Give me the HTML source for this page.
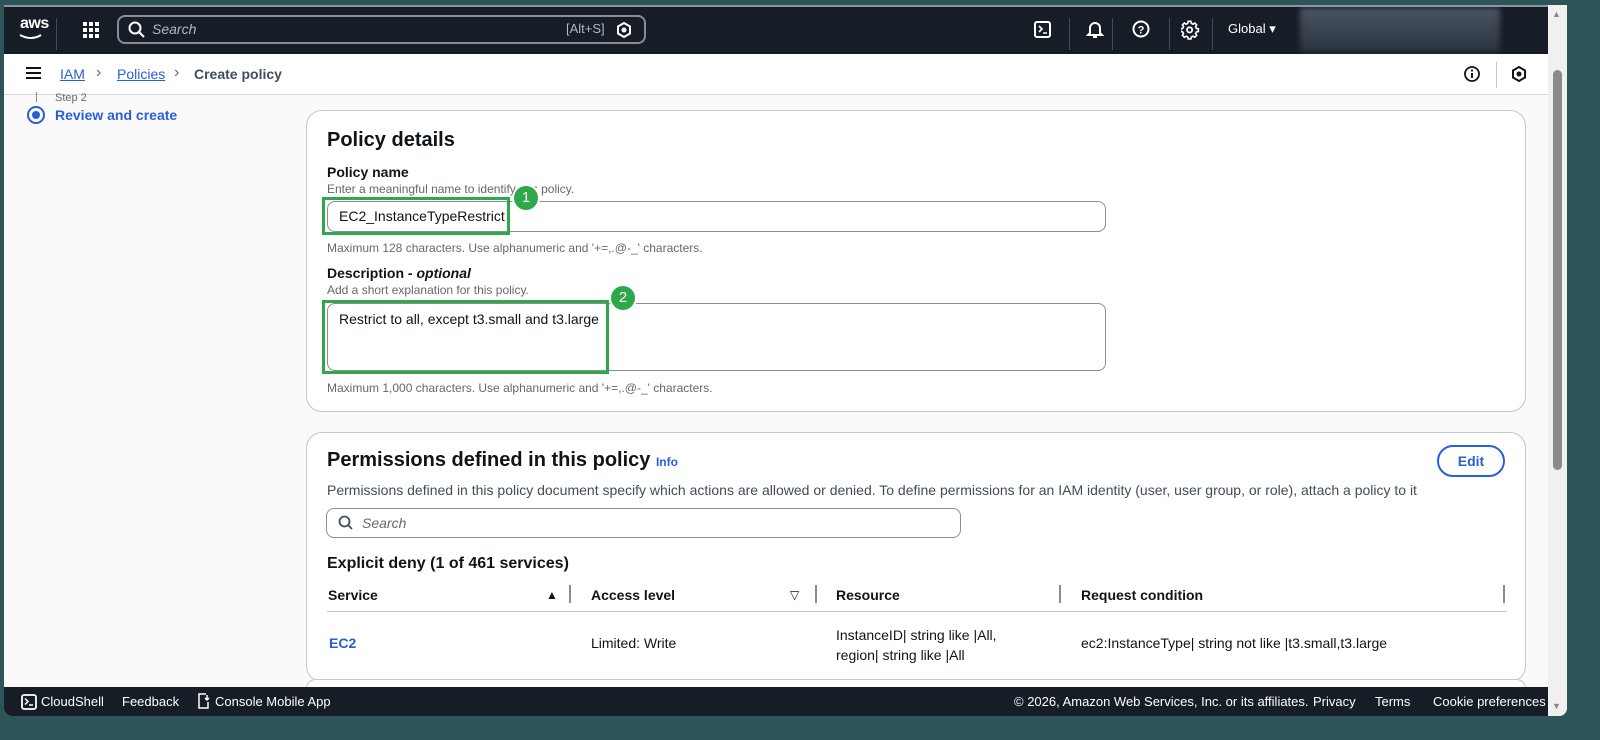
<!DOCTYPE html>
<html><head><meta charset="utf-8"><style>
*{box-sizing:border-box;margin:0;padding:0}
body{width:1600px;height:740px;background:#2d5459;font-family:"Liberation Sans",sans-serif;position:relative;overflow:hidden;color:#0f141a}
.win{position:absolute;left:4px;top:5px;width:1563px;height:711px;background:#fff;border-radius:0 0 8px 8px;overflow:hidden}
.top{position:absolute;left:0;top:0;width:1544px;height:49px;background:#161d26}
.topline{position:absolute;left:0;top:0;width:1563px;height:2px;background:#8a96a3}
.scroll{position:absolute;left:1544px;top:0;width:19px;height:711px;background:#f0f0f0}
.thumb{position:absolute;left:5px;top:65px;width:9px;height:400px;background:#8b8b8b;border-radius:5px}
.bc{position:absolute;left:0;top:49px;width:1544px;height:41px;background:#fff;border-bottom:1px solid #d5d8dc}
.main{position:absolute;left:0;top:90px;width:1544px;height:592px;background:#fafafa}
.card{position:absolute;background:#fff;border:1px solid #c6c6cd;border-radius:16px}
.lbl{font-weight:bold;font-size:14px}
.hint{font-size:12px;color:#656871}
.inp{position:absolute;border:1px solid #8c8c94;border-radius:8px;background:#fff}
.green{position:absolute;border:3px solid #2ea84a}
.badge{position:absolute;width:24px;height:24px;border-radius:50%;background:#2ea84a;color:#fff;font-size:15px;text-align:center;line-height:24px}
.foot{position:absolute;left:0;top:682px;width:1544px;height:29px;background:#161d26;color:#fff;font-size:13px}
.foot span{position:absolute;top:7px}
.th{position:absolute;top:582px;font-weight:bold;font-size:14px}
.sep{position:absolute;top:584px;width:2px;height:18px;background:#8c8c94}
</style></head><body>
<div class="win">
<div class="top">
<div style="position:absolute;left:16px;top:10px;color:#fff;font-size:16px;font-weight:bold;letter-spacing:-0.5px">aws</div>
<svg style="position:absolute;left:15px;top:28px" width="24" height="8"><path d="M1 2 Q12 8 22 2" stroke="#fff" stroke-width="2" fill="none"/></svg>
<div style="position:absolute;left:52px;top:13px;width:1px;height:32px;background:#414d5c"></div>
<svg style="position:absolute;left:79px;top:17px" width="18" height="18" fill="#fff"><rect x="0" y="0" width="4" height="4"/><rect x="6" y="0" width="4" height="4"/><rect x="12" y="0" width="4" height="4"/><rect x="0" y="6" width="4" height="4"/><rect x="6" y="6" width="4" height="4"/><rect x="12" y="6" width="4" height="4"/><rect x="0" y="12" width="4" height="4"/><rect x="6" y="12" width="4" height="4"/><rect x="12" y="12" width="4" height="4"/></svg>
<div style="position:absolute;left:113px;top:10px;width:529px;height:29px;border:2px solid #8c8c94;border-radius:8px"></div>
<svg style="position:absolute;left:124px;top:16px" width="18" height="18"><circle cx="7" cy="7" r="5.5" stroke="#fff" stroke-width="2" fill="none"/><path d="M11 11 L16 16" stroke="#fff" stroke-width="2"/></svg>
<div style="position:absolute;left:148px;top:16px;color:#b4b9bf;font-style:italic;font-size:14px">Search</div>
<div style="position:absolute;left:562px;top:16px;color:#b4b9bf;font-size:13px">[Alt+S]</div>
<svg style="position:absolute;left:612px;top:17px" width="16" height="16"><path d="M8 1 L14 4.5 L14 11.5 L8 15 L2 11.5 L2 4.5Z" stroke="#fff" stroke-width="2" fill="none"/><circle cx="8" cy="8" r="2.5" fill="#fff"/></svg>
<svg style="position:absolute;left:1030px;top:16px" width="18" height="18"><rect x="1" y="1" width="15" height="15" rx="2" stroke="#fff" stroke-width="2" fill="none"/><path d="M5 5 L8 8 L5 11 M9 12 H13" stroke="#fff" stroke-width="1.6" fill="none"/></svg>
<div style="position:absolute;left:1065px;top:13px;width:1px;height:32px;background:#414d5c"></div>
<svg style="position:absolute;left:1082px;top:15px" width="18" height="20"><path d="M4 13 V8 A5 5 0 0 1 14 8 V13 L16 15 H2Z M7 17 H11" stroke="#fff" stroke-width="2" fill="none"/></svg>
<div style="position:absolute;left:1108px;top:13px;width:1px;height:32px;background:#414d5c"></div>
<svg style="position:absolute;left:1128px;top:15px" width="20" height="20"><circle cx="9" cy="9" r="7.5" stroke="#fff" stroke-width="2" fill="none"/><text x="9" y="13.5" fill="#fff" font-size="11" font-weight="bold" text-anchor="middle" font-family="Liberation Sans">?</text></svg>
<div style="position:absolute;left:1165px;top:13px;width:1px;height:32px;background:#414d5c"></div>
<svg style="position:absolute;left:1177px;top:15px" width="20" height="20"><path d="M8 1.5h3l.5 2.2 1.8.9 2-1.2 2.1 2.1-1.2 2 .9 1.8 2.2.5v3l-2.2.5-.9 1.8 1.2 2-2.1 2.1-2-1.2-1.8.9-.5 2.2h-3l-.5-2.2-1.8-.9-2 1.2-2.1-2.1 1.2-2-.9-1.8-2.2-.5v-3l2.2-.5.9-1.8-1.2-2 2.1-2.1 2 1.2 1.8-.9z" transform="scale(0.9)" stroke="#fff" stroke-width="1.8" fill="none"/><circle cx="8.6" cy="9.9" r="2.6" stroke="#fff" stroke-width="1.8" fill="none"/></svg>
<div style="position:absolute;left:1208px;top:13px;width:1px;height:32px;background:#414d5c"></div>
<div style="position:absolute;left:1224px;top:16px;color:#fff;font-size:13px">Global ▾</div>
<div style="position:absolute;left:1296px;top:3px;width:200px;height:44px;background:linear-gradient(#4a5563,#2a333e);filter:blur(3px)"></div>
</div>
<div class="topline"></div>
<div class="bc">
<div style="position:absolute;left:22px;top:13px;width:15px;height:2px;background:#0f141a;box-shadow:0 5px 0 #0f141a,0 10px 0 #0f141a"></div>
<div style="position:absolute;left:56px;top:12px;font-size:14px;color:#295eda;text-decoration:underline">IAM</div>
<div style="position:absolute;left:92px;top:10px;font-size:16px;color:#656871">›</div>
<div style="position:absolute;left:113px;top:12px;font-size:14px;color:#295eda;text-decoration:underline">Policies</div>
<div style="position:absolute;left:170px;top:10px;font-size:16px;color:#656871">›</div>
<div style="position:absolute;left:190px;top:12px;font-size:14px;color:#414d5c;font-weight:bold">Create policy</div>
<svg style="position:absolute;left:1460px;top:12px" width="18" height="18"><circle cx="8" cy="8" r="7" stroke="#0f141a" stroke-width="1.8" fill="none"/><path d="M8 7 V12" stroke="#0f141a" stroke-width="2"/><circle cx="8" cy="4.5" r="1.1" fill="#0f141a"/></svg>
<div style="position:absolute;left:1492px;top:8px;width:1px;height:26px;background:#c6c6cd"></div>
<svg style="position:absolute;left:1507px;top:12px" width="16" height="16"><path d="M8 1 L14 4.5 L14 11.5 L8 15 L2 11.5 L2 4.5Z" stroke="#0f141a" stroke-width="2" fill="none"/><circle cx="8" cy="8" r="2.5" fill="#0f141a"/></svg>
</div>
<div class="main">
<div style="position:absolute;left:32px;top:-3px;width:1px;height:10px;background:#8c8c94"></div>
<div style="position:absolute;left:51px;top:-3px;font-size:11px;color:#656871">Step 2</div>
<div style="position:absolute;left:23px;top:11px;width:18px;height:18px;border:2px solid #295eda;border-radius:50%"><div style="margin:3px;width:8px;height:8px;border-radius:50%;background:#295eda"></div></div>
<div style="position:absolute;left:51px;top:12px;font-size:14px;color:#295eda;font-weight:bold">Review and create</div>

<div class="card" style="left:302px;top:15px;width:1220px;height:302px"></div>
<div style="position:absolute;left:323px;top:34px;font-size:20px;font-weight:bold">Policy details</div>
<div class="lbl" style="position:absolute;left:323px;top:69px">Policy name</div>
<div class="hint" style="position:absolute;left:323px;top:87px">Enter a meaningful name to identify this policy.</div>
<div class="inp" style="left:323px;top:106px;width:779px;height:31px"></div>
<div class="green" style="left:318px;top:102px;width:188px;height:38px"></div>
<div style="position:absolute;left:335px;top:113px;font-size:14px">EC2_InstanceTypeRestrict</div>
<div class="badge" style="left:508px;top:89px;border:2px solid #fff;width:28px;height:28px;line-height:24px">1</div>
<div class="hint" style="position:absolute;left:323px;top:146px">Maximum 128 characters. Use alphanumeric and '+=,.@-_' characters.</div>
<div class="lbl" style="position:absolute;left:323px;top:170px">Description - <i>optional</i></div>
<div class="hint" style="position:absolute;left:323px;top:188px">Add a short explanation for this policy.</div>
<div class="inp" style="left:323px;top:208px;width:779px;height:68px"></div>
<div class="green" style="left:318px;top:205px;width:287px;height:74px"></div>
<div style="position:absolute;left:335px;top:216px;font-size:14px">Restrict to all, except t3.small and t3.large</div>
<div class="badge" style="left:605px;top:189px;border:2px solid #fff;width:28px;height:28px;line-height:24px">2</div>
<div class="hint" style="position:absolute;left:323px;top:286px">Maximum 1,000 characters. Use alphanumeric and '+=,.@-_' characters.</div>

<div class="card" style="left:302px;top:337px;width:1220px;height:250px"></div>
<div style="position:absolute;left:323px;top:354px;font-size:20px;font-weight:bold">Permissions defined in this policy <span style="font-size:12px;color:#295eda">Info</span></div>
<div style="position:absolute;left:1433px;top:350px;width:68px;height:32px;border:2px solid #295eda;border-radius:16px;color:#295eda;font-weight:bold;font-size:14px;text-align:center;line-height:28px">Edit</div>
<div style="position:absolute;left:323px;top:387px;font-size:14px;color:#414d5c">Permissions defined in this policy document specify which actions are allowed or denied. To define permissions for an IAM identity (user, user group, or role), attach a policy to it</div>
<div class="inp" style="left:322px;top:413px;width:635px;height:30px"></div>
<svg style="position:absolute;left:334px;top:420px" width="16" height="16"><circle cx="6.5" cy="6.5" r="5" stroke="#414d5c" stroke-width="1.8" fill="none"/><path d="M10 10 L14 14" stroke="#414d5c" stroke-width="1.8"/></svg>
<div style="position:absolute;left:358px;top:420px;font-size:14px;font-style:italic;color:#656871">Search</div>
<div style="position:absolute;left:323px;top:460px;font-size:16px;font-weight:bold">Explicit deny (1 of 461 services)</div>
</div>
<div class="th" style="left:324px;top:582px">Service</div>
<div style="position:absolute;left:542px;top:583px;font-size:12px">▲</div>
<div class="sep" style="left:565px;top:580px"></div>
<div class="th" style="left:587px;top:582px">Access level</div>
<div style="position:absolute;left:786px;top:583px;font-size:12px">▽</div>
<div class="sep" style="left:811px;top:580px"></div>
<div class="th" style="left:832px;top:582px">Resource</div>
<div class="sep" style="left:1055px;top:580px"></div>
<div class="th" style="left:1077px;top:582px">Request condition</div>
<div class="sep" style="left:1499px;top:580px"></div>
<div style="position:absolute;left:323px;top:606px;width:1179px;height:1px;background:#c6c6cd"></div>
<div style="position:absolute;left:325px;top:630px;font-size:14px;font-weight:bold;color:#295eda">EC2</div>
<div style="position:absolute;left:587px;top:630px;font-size:14px">Limited: Write</div>
<div style="position:absolute;left:832px;top:620px;font-size:14px;line-height:20px">InstanceID| string like |All,<br>region| string like |All</div>
<div style="position:absolute;left:1077px;top:630px;font-size:14px">ec2:InstanceType| string not like |t3.small,t3.large</div>
<div style="position:absolute;left:302px;top:674px;width:1220px;height:20px;border:1px solid #c6c6cd;border-radius:16px;background:#fff"></div>
<div class="foot">
<svg style="position:absolute;left:17px;top:7px" width="16" height="16"><rect x="1" y="1" width="14" height="14" rx="2" stroke="#fff" stroke-width="1.8" fill="none"/><path d="M4 4.5 L7 7.5 L4 10.5 M8 11 H12" stroke="#fff" stroke-width="1.5" fill="none"/></svg>
<span style="left:37px">CloudShell</span><span style="left:118px">Feedback</span>
<svg style="position:absolute;left:193px;top:6px" width="14" height="17"><path d="M9 1 H2 V15 H11 V9 M10 2 V7 M8 5 L10 7 L12 5" stroke="#fff" stroke-width="1.5" fill="none"/></svg>
<span style="left:211px">Console Mobile App</span>
<span style="left:1010px">© 2026, Amazon Web Services, Inc. or its affiliates.</span>
<span style="left:1309px">Privacy</span><span style="left:1371px">Terms</span><span style="left:1429px">Cookie preferences</span>
</div>
<div class="scroll"><div style="position:absolute;left:4px;top:4px;font-size:9px;color:#888">▲</div><div class="thumb"></div><div style="position:absolute;left:4px;top:696px;font-size:9px;color:#888">▼</div></div>
</div>
</body></html>
